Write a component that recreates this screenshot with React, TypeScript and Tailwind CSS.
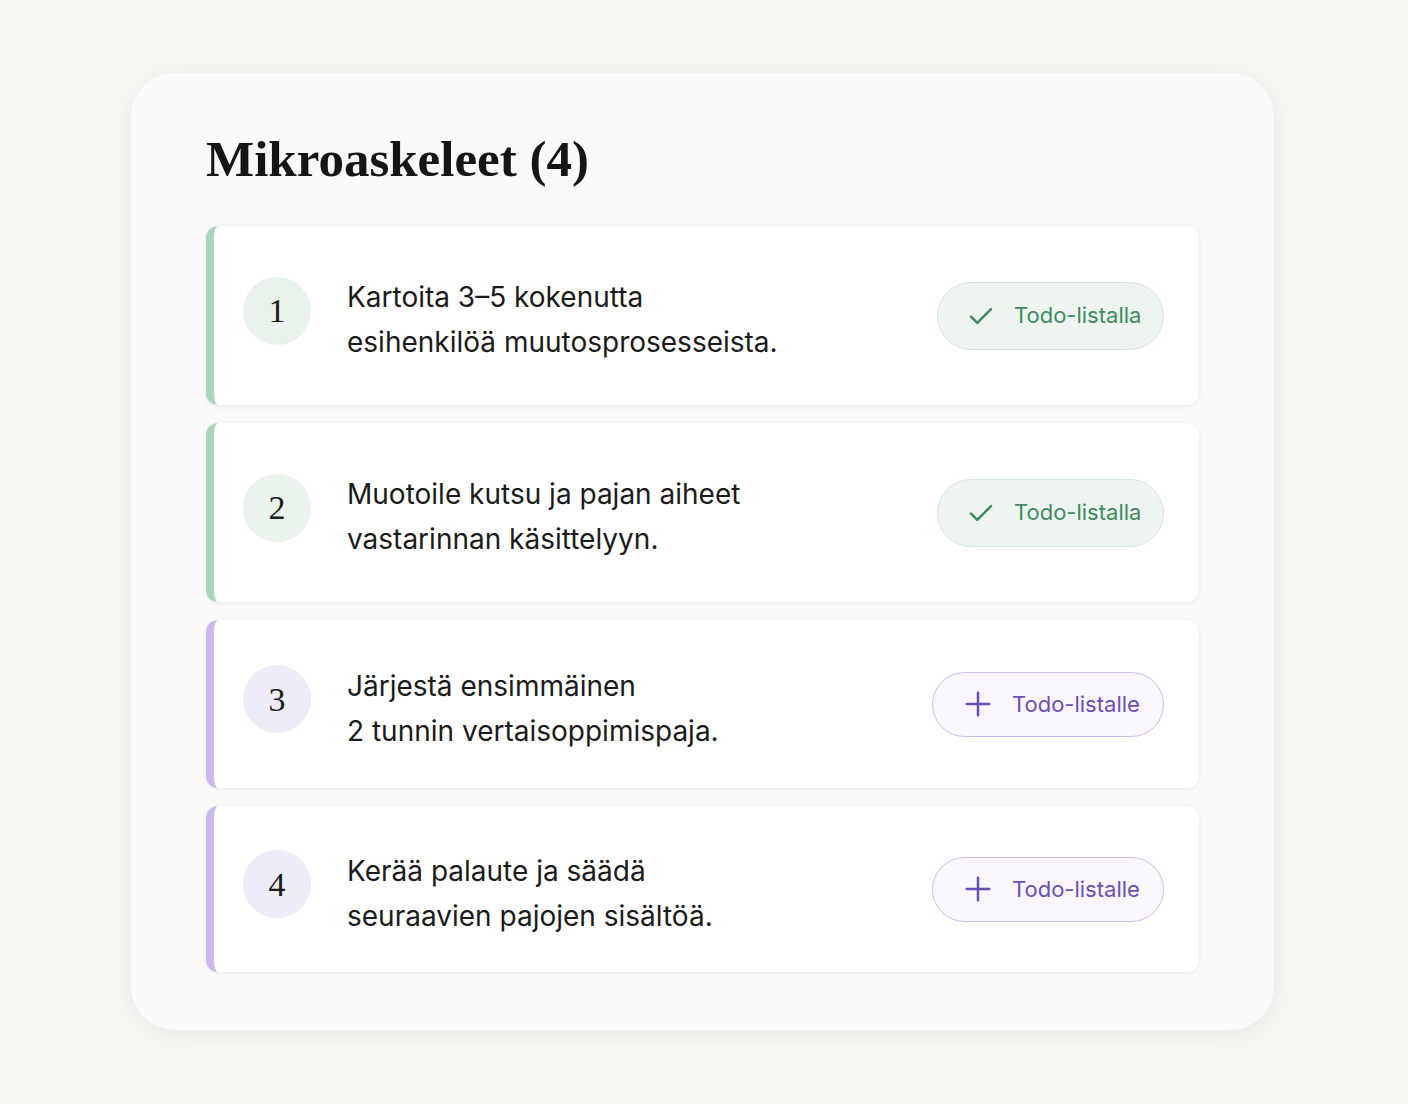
import React from "react";

type Step = {
  n: number;
  text: [string, string];
  added: boolean;
  h: string;
};

const steps: Step[] = [
  { n: 1, text: ["Kartoita 3–5 kokenutta", "esihenkilöä muutosprosesseista."], added: true, h: "h-[179px]" },
  { n: 2, text: ["Muotoile kutsu ja pajan aiheet", "vastarinnan käsittelyyn."], added: true, h: "h-[179px]" },
  { n: 3, text: ["Järjestä ensimmäinen", "2 tunnin vertaisoppimispaja."], added: false, h: "h-[168px]" },
  { n: 4, text: ["Kerää palaute ja säädä", "seuraavien pajojen sisältöä."], added: false, h: "h-[166px]" },
];

const serif = { fontFamily: '"Liberation Serif", "DejaVu Serif", serif' };

function StepRow({ step }: { step: Step }) {
  const { n, text, added, h } = step;
  return (
    <div
      className={
        "flex items-center rounded-xl border-l-[8px] bg-white shadow-[0_1px_4px_rgba(0,0,0,0.08)] pl-[29px] pr-[35px] " +
        h +
        (added ? " border-[#a9d6bd]" : " border-[#c9b9ec]")
      }
    >
      <div
        className={
          "mb-[10px] flex h-[68px] w-[68px] shrink-0 items-center justify-center rounded-full text-[34px] text-[#1c1c1c] " +
          (added ? "bg-[#e9f2eb]" : "bg-[#f0ebf8]")
        }
        style={serif}
      >
        {n}
      </div>
      <div className="ml-[36px] mt-[9px] flex-1 text-[28px] leading-[45px] text-[#1b1b1b]">
        <div>{text[0]}</div>
        <div>{text[1]}</div>
      </div>
      {added ? (
        <div className="flex h-[68px] w-[227px] items-center rounded-full border border-[#d3e8da] bg-[#eef5f0] pl-[28px] text-[22px] text-[#3f8b60]">
          <svg width="30" height="30" viewBox="0 0 24 24" fill="none" stroke="currentColor" strokeWidth="2" strokeLinecap="round" strokeLinejoin="round">
            <path d="M4 12.5l5 5L20 6.5" />
          </svg>
          <span className="ml-[18px]">Todo-listalla</span>
        </div>
      ) : (
        <div className="flex h-[65px] w-[232px] items-center rounded-full border border-[#cdbcec] bg-[#f9f6fd] pl-[30px] text-[22px] text-[#6a50b6]">
          <svg width="30" height="30" viewBox="0 0 24 24" fill="none" stroke="currentColor" strokeWidth="2" strokeLinecap="round">
            <path d="M12 3v18M3 12h18" />
          </svg>
          <span className="ml-[19px]">Todo-listalle</span>
        </div>
      )}
    </div>
  );
}

export default function App() {
  return (
    <div
      className="min-h-screen bg-[#f7f6f2] pt-[73px] pl-[131px]"
      style={{ fontFamily: 'Inter, "Noto Sans", sans-serif' }}
    >
      <div className="w-[1143px] rounded-[44px] bg-[#fbfaf8] px-[75px] pt-[56px] pb-[58px] shadow-[0_4px_24px_rgba(0,0,0,0.06)]">
        <h1 className="mb-[37px] text-[51px] font-bold leading-[60px] text-[#151515]" style={serif}>
          Mikroaskeleet (4)
        </h1>
        <div className="flex flex-col gap-[18px]">
          {steps.map((s) => (
            <StepRow key={s.n} step={s} />
          ))}
        </div>
      </div>
    </div>
  );
}
